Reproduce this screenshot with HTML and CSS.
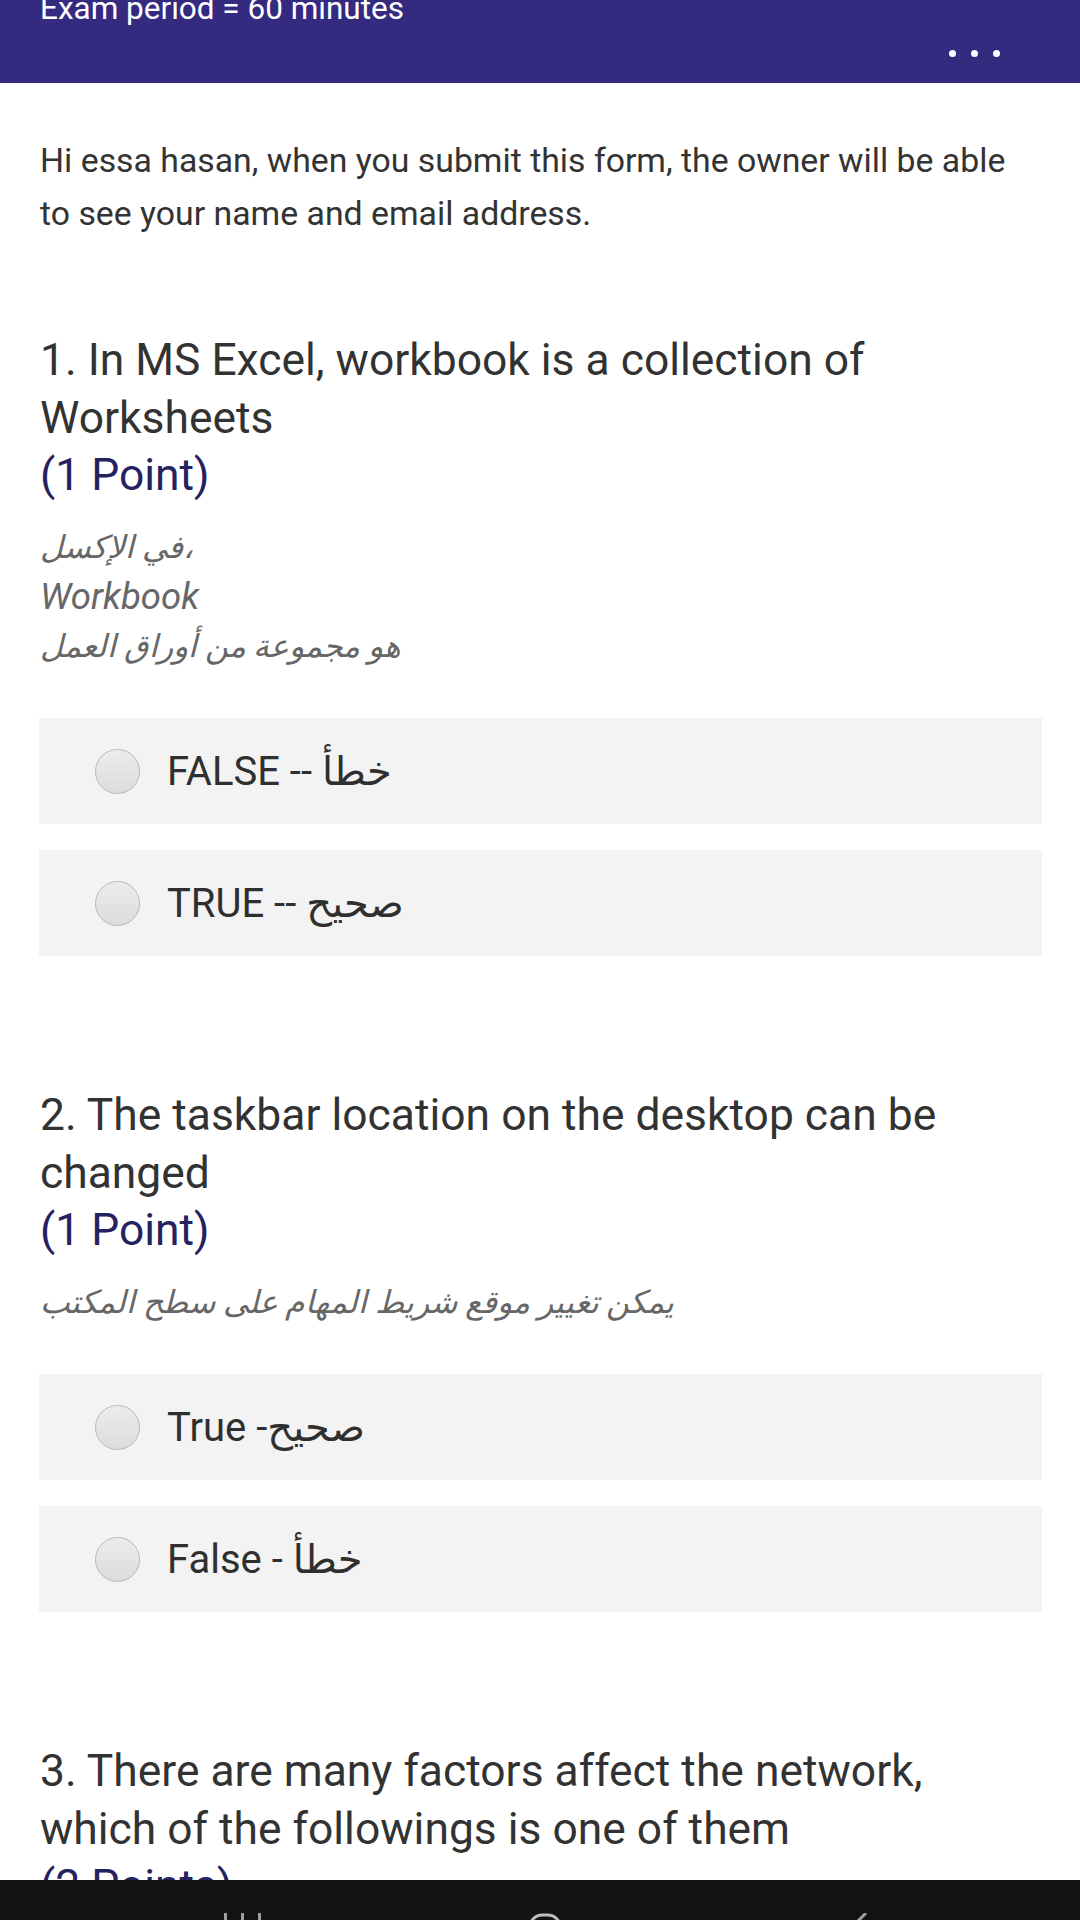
FILE: index.html
```html
<!DOCTYPE html>
<html lang="en">
<head>
<meta charset="utf-8">
<title>Form</title>
<link rel="stylesheet" href="styles.css">
</head>
<body>
<header class="topbar">
  <div class="topbar-title">Exam period = 60 minutes</div>
  <div class="topbar-row">
    <div class="more"><span></span><span></span><span></span></div>
  </div>
</header>

<main class="content">
  <p class="intro">Hi essa hasan, when you submit this form, the owner will be able to see your name and email address.</p>

  <section class="question q-first">
    <h2 class="q-title">1. In MS Excel, workbook is a collection of Worksheets<span class="points">(1 Point)</span></h2>
    <div class="q-desc">
      <div class="ar">في الإكسل،</div>
      <div>Workbook</div>
      <div class="ar">هو مجموعة من أوراق العمل</div>
    </div>
    <div class="options">
      <label class="option"><span class="radio"></span><span class="opt-text">FALSE -- خطأ</span></label>
      <label class="option"><span class="radio"></span><span class="opt-text">TRUE -- صحيح</span></label>
    </div>
  </section>

  <section class="question">
    <h2 class="q-title">2. The taskbar location on the desktop can be changed<span class="points">(1 Point)</span></h2>
    <div class="q-desc">
      <div class="ar">يمكن تغيير موقع شريط المهام على سطح المكتب</div>
    </div>
    <div class="options">
      <label class="option"><span class="radio"></span><span class="opt-text">True -صحيح</span></label>
      <label class="option"><span class="radio"></span><span class="opt-text">False - خطأ</span></label>
    </div>
  </section>

  <section class="question">
    <h2 class="q-title">3. There are many factors affect the network, which of the followings is one of them<span class="points">(2 Points)</span></h2>
  </section>
</main>

<nav class="navbar">
  <svg class="nav-icon nav-recent" width="40" height="10" viewBox="0 0 40 10"><rect x="0" y="0" width="3" height="10" fill="#9e9e9e"/><rect x="17" y="0" width="3" height="10" fill="#9e9e9e"/><rect x="34" y="0" width="3" height="10" fill="#9e9e9e"/></svg>
  <svg class="nav-icon nav-home" width="34" height="10" viewBox="0 0 34 10"><rect x="2" y="2" width="30" height="30" rx="12" fill="none" stroke="#bdbdbd" stroke-width="3"/></svg>
  <svg class="nav-icon nav-back" width="20" height="10" viewBox="0 0 20 10"><path d="M14 0 L4 10" stroke="#9e9e9e" stroke-width="3" fill="none"/></svg>
</nav>
</body>
</html>
```
FILE: styles.css
```css
* { box-sizing: border-box; }

html, body {
  margin: 0;
  padding: 0;
}

body {
  width: 1080px;
  height: 1920px;
  overflow: hidden;
  background: #ffffff;
  font-family: Roboto, "DejaVu Sans", "Noto Sans", sans-serif;
  color: #333333;
}

.topbar {
  height: 83px;
  background: #342a7f;
  padding: 0 40px;
  overflow: hidden;
}

.topbar-title {
  color: #ffffff;
  font-size: 31.5px;
  line-height: 36px;
  margin-top: -9px;
}

.topbar-row {
  display: flex;
  justify-content: flex-end;
  padding-right: 40px;
  margin-top: 23px;
}

.more {
  display: flex;
  gap: 15px;
}

.more span {
  width: 7px;
  height: 7px;
  border-radius: 50%;
  background: #ffffff;
}

.content {
  padding: 51px 38px 0 40px;
}

.intro {
  margin: 0;
  font-size: 33.8px;
  line-height: 53px;
  color: #333333;
}

.question {
  margin-top: 131px;
}

.question.q-first {
  margin-top: 92px;
}

.q-title {
  margin: 0;
  font-weight: 400;
  font-size: 44.4px;
  line-height: 57.5px;
  color: #323232;
}

.points {
  display: block;
  color: #26215f;
}

.q-desc {
  margin-top: 18px;
  font-size: 36.5px;
  line-height: 49.5px;
  font-style: italic;
  color: #676767;
}

.q-desc .ar {
  font-size: 31.6px;
}

.options {
  margin-top: 47px;
  display: flex;
  flex-direction: column;
  gap: 26px;
  margin-left: -1px;
}

.option {
  height: 106px;
  background: #f3f3f3;
  display: flex;
  align-items: center;
  padding-left: 56px;
}

.radio {
  width: 45px;
  height: 45px;
  border-radius: 50%;
  border: 1.5px solid #b9b9b9;
  background: linear-gradient(#ececec, #dcdcdc);
  flex: none;
}

.opt-text {
  margin-left: 27px;
  font-size: 40px;
  color: #2f2f2f;
}

.navbar {
  position: fixed;
  left: 0;
  bottom: 0;
  width: 1080px;
  height: 40px;
  background: #121212;
  display: flex;
  align-items: flex-start;
  padding-top: 33px;
  overflow: hidden;
}

.nav-icon { flex: none; display: block; }
.nav-recent { margin-left: 224px; }
.nav-home { margin-left: 264px; }
.nav-back { margin-left: 290px; }
```
